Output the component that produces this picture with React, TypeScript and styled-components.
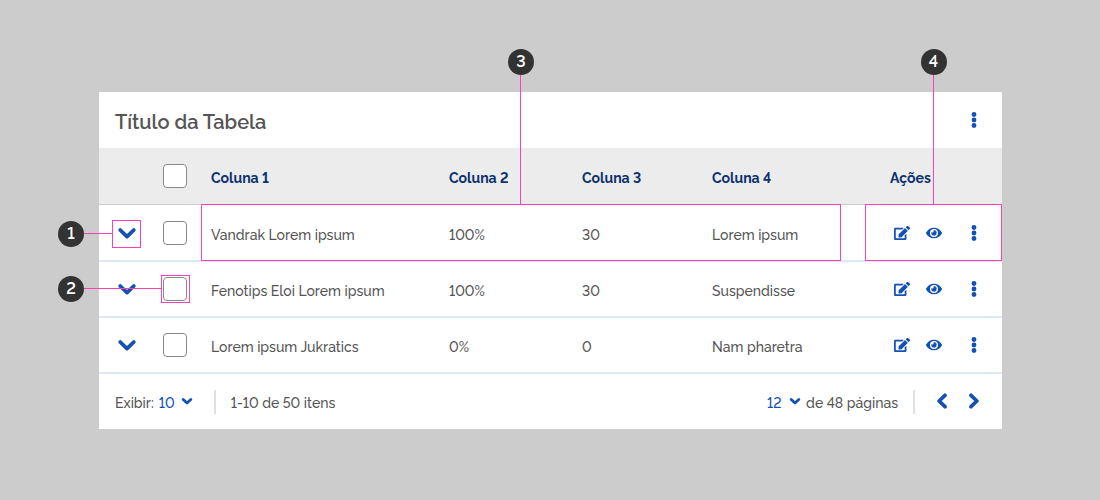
import React from "react";
import styled, { createGlobalStyle } from "styled-components";
import { FaEdit, FaEye } from "react-icons/fa";

const colors = {
  page: "#cccccc",
  surface: "#ffffff",
  head: "#ececec",
  text: "#555555",
  heading: "#0c326f",
  action: "#1351b4",
  rule: "#dfe8f5",
  marker: "#333333",
  callout: "#ff40b4",
};

const GlobalStyle = createGlobalStyle`
  *, *::before, *::after { box-sizing: border-box; }
  body {
    margin: 0;
    background: ${colors.page};
    color: ${colors.text};
    font: 500 14px/20px Raleway, Lato, "Open Sans", sans-serif;
    font-variant-numeric: lining-nums;
  }
  button, select, input { font: inherit; font-variant-numeric: inherit; margin: 0; }
`;

const Page = styled.main`
  padding: 92px 98px 71px 99px;
`;

const Card = styled.section`
  position: relative;
  background: ${colors.surface};
`;

const TitleBar = styled.header`
  display: flex;
  align-items: center;
  justify-content: space-between;
  height: 56px;
  padding: 0 16px;
`;

const Title = styled.h1`
  margin: 0;
  padding-top: 3px;
  font-size: 20px;
  line-height: 28px;
  font-weight: 600;
`;

const IconButton = styled.button`
  display: inline-flex;
  align-items: center;
  justify-content: center;
  width: 24px;
  height: 24px;
  padding: 0;
  border: 0;
  background: none;
  color: ${colors.action};
  font-size: 16px;
  cursor: pointer;
`;

const Table = styled.table`
  width: 100%;
  table-layout: fixed;
  border-collapse: separate;
  border-spacing: 0;
`;

const Col = styled.col<{ $width?: number }>`
  width: ${(p) => (p.$width ? `${p.$width}px` : "auto")};
`;

const HeadRow = styled.tr`
  height: 57px;
  background: ${colors.head};
`;

const HeadCell = styled.th`
  padding: 4px 16px 0;
  border-bottom: 1px solid ${colors.page};
  color: ${colors.heading};
  font-weight: 700;
  text-align: left;
`;

const HeadControl = styled.td`
  padding: 0;
  border-bottom: 1px solid ${colors.page};
  text-align: center;
`;

const Row = styled.tr`
  height: 56px;
  &:first-child { height: 57px; }
`;

const Cell = styled.td`
  padding: 4px 16px 0;
  border-bottom: 2px solid ${colors.rule};
`;

const ControlCell = styled.td`
  padding: 0;
  border-bottom: 2px solid ${colors.rule};
  text-align: center;
`;

const Centered = styled.div`
  display: flex;
  align-items: center;
  justify-content: center;
`;

const Actions = styled.div`
  display: flex;
  align-items: center;
  gap: 8px;
  padding: 0 16px;
  & > :last-child { margin-left: auto; }
`;

const Checkbox = styled.input`
  appearance: none;
  width: 24px;
  height: 24px;
  border: 1px solid #888888;
  border-radius: 4px;
  background: ${colors.surface};
  &:checked { background: ${colors.action}; }
`;

const Footer = styled.footer`
  display: flex;
  align-items: center;
  justify-content: space-between;
  height: 55px;
  padding: 0 16px;
`;

const FooterGroup = styled.div`
  display: flex;
  align-items: center;
`;

const FooterText = styled.span`
  padding-top: 3px;
`;

const Picker = styled.label`
  display: flex;
  align-items: center;
  gap: 5px;
`;

const SelectWrap = styled.span`
  display: grid;
  grid-template-columns: 22px 12px;
  align-items: center;
  color: ${colors.action};
  & > svg { grid-area: 1 / 2; pointer-events: none; }
`;

const Select = styled.select`
  grid-area: 1 / 1 / 2 / 3;
  appearance: none;
  width: 100%;
  padding: 3px 0 0;
  border: 0;
  background: none;
  color: inherit;
`;

const Divider = styled.span<{ $before?: number }>`
  width: 2px;
  height: 24px;
  margin: 0 15px 0 ${(p) => p.$before ?? 15}px;
  background: #e0e0e0;
`;

const PageButtons = styled.div`
  display: flex;
  gap: 8px;
  padding-bottom: 2px;
`;

const Outline = styled.div<{ $left?: number; $right?: number; $top: number; $width?: number; $height: number }>`
  position: absolute;
  top: ${(p) => p.$top}px;
  left: ${(p) => (p.$left === undefined ? "auto" : `${p.$left}px`)};
  right: ${(p) => (p.$right === undefined ? "auto" : `${p.$right}px`)};
  width: ${(p) => (p.$width ? `${p.$width}px` : "auto")};
  height: ${(p) => p.$height}px;
  border: 1px solid ${colors.callout};
  pointer-events: none;
`;

const Callout = styled.div<{ $vertical?: boolean; $reach: number }>`
  position: absolute;
  display: flex;
  flex-direction: ${(p) => (p.$vertical ? "column" : "row")};
  align-items: center;
  ${(p) =>
    p.$vertical
      ? `bottom: 100%; left: 0; right: 0; height: ${p.$reach}px;`
      : `right: 100%; top: 0; bottom: 0; width: ${p.$reach}px;`}
  &::after {
    content: "";
    flex: 1;
    ${(p) => (p.$vertical ? "width: 1px; margin-right: 1px;" : "height: 1px; margin-bottom: 1px;")}
    background: ${colors.callout};
  }
`;

const Marker = styled.span`
  display: flex;
  flex: none;
  align-items: center;
  justify-content: center;
  width: 26px;
  height: 26px;
  border-radius: 50%;
  background: ${colors.marker};
  color: #ffffff;
  font-size: 16px;
  font-weight: 600;
`;

const chevrons = {
  expand: { size: 20, stroke: 3.8, d: "M3.2 7 10 13.6 16.8 7" },
  select: { size: 12, stroke: 2.8, d: "M2.2 3.5 6 7.1 9.8 3.5" },
  previous: { size: 16, stroke: 3.7, d: "M11 2.3 5.1 8 11 13.7" },
  next: { size: 16, stroke: 3.7, d: "M5 2.3 10.9 8 5 13.7" },
};

function Chevron({ kind }: { kind: keyof typeof chevrons }) {
  const { size, stroke, d } = chevrons[kind];
  return (
    <svg width={size} height={size} viewBox={`0 0 ${size} ${size}`} fill="none" aria-hidden="true">
      <path d={d} stroke="currentColor" strokeWidth={stroke} strokeLinecap="round" strokeLinejoin="round" />
    </svg>
  );
}

function MoreIcon() {
  return (
    <svg width="16" height="16" viewBox="0 0 16 16" fill="currentColor" aria-hidden="true">
      <circle cx="8" cy="2.5" r="2.4" />
      <circle cx="8" cy="8" r="2.4" />
      <circle cx="8" cy="13.5" r="2.4" />
    </svg>
  );
}

const rows = [
  ["Vandrak Lorem ipsum", "100%", "30", "Lorem ipsum"],
  ["Fenotips Eloi Lorem ipsum", "100%", "30", "Suspendisse"],
  ["Lorem ipsum Jukratics", "0%", "0", "Nam pharetra"],
];

export default function App() {
  return (
    <>
      <GlobalStyle />
      <Page>
        <Card>
          <TitleBar>
            <Title>Título da Tabela</Title>
            <IconButton aria-label="Opções da tabela"><MoreIcon /></IconButton>
          </TitleBar>
          <Table>
            <colgroup>
              <Col $width={56} />
              <Col $width={40} />
              <Col $width={238} />
              <Col $width={133} />
              <Col $width={130} />
              <Col />
              <Col $width={128} />
            </colgroup>
            <thead>
              <HeadRow>
                <HeadControl />
                <HeadControl>
                  <Centered><Checkbox type="checkbox" aria-label="Selecionar tudo" /></Centered>
                </HeadControl>
                <HeadCell scope="col">Coluna 1</HeadCell>
                <HeadCell scope="col">Coluna 2</HeadCell>
                <HeadCell scope="col">Coluna 3</HeadCell>
                <HeadCell scope="col">Coluna 4</HeadCell>
                <HeadCell scope="col">Ações</HeadCell>
              </HeadRow>
            </thead>
            <tbody>
              {rows.map((row) => (
                <Row key={row[0]}>
                  <ControlCell>
                    <Centered>
                      <IconButton aria-label={`Expandir ${row[0]}`}><Chevron kind="expand" /></IconButton>
                    </Centered>
                  </ControlCell>
                  <ControlCell>
                    <Centered><Checkbox type="checkbox" aria-label={`Selecionar ${row[0]}`} /></Centered>
                  </ControlCell>
                  {row.map((value, i) => <Cell key={i}>{value}</Cell>)}
                  <ControlCell>
                    <Actions>
                      <IconButton aria-label="Editar"><FaEdit /></IconButton>
                      <IconButton aria-label="Visualizar"><FaEye /></IconButton>
                      <IconButton aria-label="Mais ações"><MoreIcon /></IconButton>
                    </Actions>
                  </ControlCell>
                </Row>
              ))}
            </tbody>
          </Table>
          <Footer>
            <FooterGroup>
              <Picker>
                <FooterText>Exibir:</FooterText>
                <SelectWrap>
                  <Select defaultValue="10"><option>10</option><option>20</option><option>50</option></Select>
                  <Chevron kind="select" />
                </SelectWrap>
              </Picker>
              <Divider $before={21} />
              <FooterText>1-10 de 50 itens</FooterText>
            </FooterGroup>
            <FooterGroup>
              <Picker>
                <SelectWrap>
                  <Select defaultValue="12" aria-label="Página"><option>11</option><option>12</option><option>13</option></Select>
                  <Chevron kind="select" />
                </SelectWrap>
                <FooterText>de 48 páginas</FooterText>
              </Picker>
              <Divider />
              <PageButtons>
                <IconButton aria-label="Página anterior"><Chevron kind="previous" /></IconButton>
                <IconButton aria-label="Próxima página"><Chevron kind="next" /></IconButton>
              </PageButtons>
            </FooterGroup>
          </Footer>

          <Outline $left={13} $top={128} $width={29} $height={28}>
            <Callout $reach={55}><Marker>1</Marker></Callout>
          </Outline>
          <Outline $left={62} $top={183} $width={29} $height={28}>
            <Callout $reach={104}><Marker>2</Marker></Callout>
          </Outline>
          <Outline $left={102} $right={161} $top={112} $height={57}>
            <Callout $vertical $reach={156}><Marker>3</Marker></Callout>
          </Outline>
          <Outline $right={0} $top={112} $width={137} $height={57}>
            <Callout $vertical $reach={156}><Marker>4</Marker></Callout>
          </Outline>
        </Card>
      </Page>
    </>
  );
}
